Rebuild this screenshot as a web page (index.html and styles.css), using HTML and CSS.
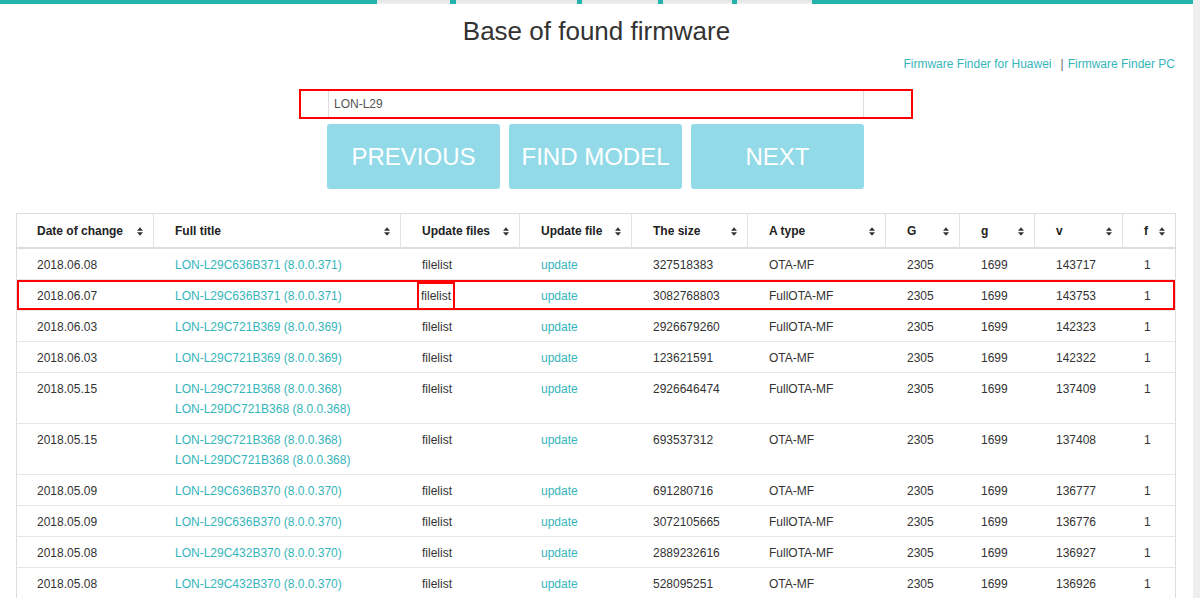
FILE: index.html
```html
<!DOCTYPE html>
<html>
<head>
<meta charset="utf-8">
<link rel="stylesheet" href="styles.css">
</head>
<body>
<div class="page">
  <div class="main">
    <div class="topbar">
      <span class="tab"></span><span class="tab"></span><span class="tab"></span><span class="tab"></span><span class="tab"></span>
    </div>
    <h1 class="title">Base of found firmware</h1>
    <div class="links">
      <a class="link">Firmware Finder for Huawei</a><span class="sep">|</span><a class="link">Firmware Finder PC</a>
    </div>
    <div class="search-box">
      <div class="search-input">LON-L29</div>
    </div>
    <div class="buttons">
      <div class="btn">PREVIOUS</div>
      <div class="btn">FIND MODEL</div>
      <div class="btn">NEXT</div>
    </div>
    <table class="fw">
      <colgroup>
        <col class="c1"><col class="c2"><col class="c3"><col class="c4"><col class="c5"><col class="c6"><col class="c7"><col class="c8"><col class="c9"><col class="c10">
      </colgroup>
      <thead>
        <tr>
          <th><div class="th-in"><span>Date of change</span><svg class="sort" viewBox="0 0 7 10"><path d="M0 4 L3.5 0 L7 4Z M0 6 L3.5 10 L7 6Z"/></svg></div></th>
          <th><div class="th-in"><span>Full title</span><svg class="sort" viewBox="0 0 7 10"><path d="M0 4 L3.5 0 L7 4Z M0 6 L3.5 10 L7 6Z"/></svg></div></th>
          <th><div class="th-in"><span>Update files</span><svg class="sort" viewBox="0 0 7 10"><path d="M0 4 L3.5 0 L7 4Z M0 6 L3.5 10 L7 6Z"/></svg></div></th>
          <th><div class="th-in"><span>Update file</span><svg class="sort" viewBox="0 0 7 10"><path d="M0 4 L3.5 0 L7 4Z M0 6 L3.5 10 L7 6Z"/></svg></div></th>
          <th><div class="th-in"><span>The size</span><svg class="sort" viewBox="0 0 7 10"><path d="M0 4 L3.5 0 L7 4Z M0 6 L3.5 10 L7 6Z"/></svg></div></th>
          <th><div class="th-in"><span>A type</span><svg class="sort" viewBox="0 0 7 10"><path d="M0 4 L3.5 0 L7 4Z M0 6 L3.5 10 L7 6Z"/></svg></div></th>
          <th><div class="th-in"><span>G</span><svg class="sort" viewBox="0 0 7 10"><path d="M0 4 L3.5 0 L7 4Z M0 6 L3.5 10 L7 6Z"/></svg></div></th>
          <th><div class="th-in"><span>g</span><svg class="sort" viewBox="0 0 7 10"><path d="M0 4 L3.5 0 L7 4Z M0 6 L3.5 10 L7 6Z"/></svg></div></th>
          <th><div class="th-in"><span>v</span><svg class="sort" viewBox="0 0 7 10"><path d="M0 4 L3.5 0 L7 4Z M0 6 L3.5 10 L7 6Z"/></svg></div></th>
          <th><div class="th-in"><span>f</span><svg class="sort" viewBox="0 0 7 10"><path d="M0 4 L3.5 0 L7 4Z M0 6 L3.5 10 L7 6Z"/></svg></div></th>
        </tr>
      </thead>
      <tbody>
        <tr><td>2018.06.08</td><td><a class="link">LON-L29C636B371 (8.0.0.371)</a></td><td>filelist</td><td><a class="link">update</a></td><td>327518383</td><td>OTA-MF</td><td>2305</td><td>1699</td><td>143717</td><td>1</td></tr>
        <tr class="marked"><td>2018.06.07</td><td><a class="link">LON-L29C636B371 (8.0.0.371)</a></td><td><span class="boxed">filelist</span></td><td><a class="link">update</a></td><td>3082768803</td><td>FullOTA-MF</td><td>2305</td><td>1699</td><td>143753</td><td>1</td></tr>
        <tr><td>2018.06.03</td><td><a class="link">LON-L29C721B369 (8.0.0.369)</a></td><td>filelist</td><td><a class="link">update</a></td><td>2926679260</td><td>FullOTA-MF</td><td>2305</td><td>1699</td><td>142323</td><td>1</td></tr>
        <tr><td>2018.06.03</td><td><a class="link">LON-L29C721B369 (8.0.0.369)</a></td><td>filelist</td><td><a class="link">update</a></td><td>123621591</td><td>OTA-MF</td><td>2305</td><td>1699</td><td>142322</td><td>1</td></tr>
        <tr><td>2018.05.15</td><td><a class="link">LON-L29C721B368 (8.0.0.368)</a><br><a class="link">LON-L29DC721B368 (8.0.0.368)</a></td><td>filelist</td><td><a class="link">update</a></td><td>2926646474</td><td>FullOTA-MF</td><td>2305</td><td>1699</td><td>137409</td><td>1</td></tr>
        <tr><td>2018.05.15</td><td><a class="link">LON-L29C721B368 (8.0.0.368)</a><br><a class="link">LON-L29DC721B368 (8.0.0.368)</a></td><td>filelist</td><td><a class="link">update</a></td><td>693537312</td><td>OTA-MF</td><td>2305</td><td>1699</td><td>137408</td><td>1</td></tr>
        <tr><td>2018.05.09</td><td><a class="link">LON-L29C636B370 (8.0.0.370)</a></td><td>filelist</td><td><a class="link">update</a></td><td>691280716</td><td>OTA-MF</td><td>2305</td><td>1699</td><td>136777</td><td>1</td></tr>
        <tr><td>2018.05.09</td><td><a class="link">LON-L29C636B370 (8.0.0.370)</a></td><td>filelist</td><td><a class="link">update</a></td><td>3072105665</td><td>FullOTA-MF</td><td>2305</td><td>1699</td><td>136776</td><td>1</td></tr>
        <tr><td>2018.05.08</td><td><a class="link">LON-L29C432B370 (8.0.0.370)</a></td><td>filelist</td><td><a class="link">update</a></td><td>2889232616</td><td>FullOTA-MF</td><td>2305</td><td>1699</td><td>136927</td><td>1</td></tr>
        <tr><td>2018.05.08</td><td><a class="link">LON-L29C432B370 (8.0.0.370)</a></td><td>filelist</td><td><a class="link">update</a></td><td>528095251</td><td>OTA-MF</td><td>2305</td><td>1699</td><td>136926</td><td>1</td></tr>
      </tbody>
    </table>
  </div>
  <div class="scrollstrip"></div>
</div>
</body>
</html>
```
FILE: styles.css
```css
html, body {
  margin: 0;
  padding: 0;
  height: 598px;
  overflow: hidden;
  background: #fff;
}
body {
  font-family: "Liberation Sans", Arial, sans-serif;
  font-size: 12px;
  color: #333;
}
.page {
  display: flex;
  height: 598px;
}
.main {
  width: 1193px;
  flex: none;
}
.scrollstrip {
  flex: 1;
  background: #eeeeee;
}
.topbar {
  height: 4px;
  background: #22b3ad;
  display: flex;
  gap: 5px;
  padding-left: 377px;
}
.tab {
  height: 4px;
  background: linear-gradient(#e4e4e4, #f0f0f0);
}
.tab:nth-child(1) { width: 73px; margin-right: 1px; }
.tab:nth-child(2) { width: 121px; }
.tab:nth-child(3) { width: 76px; }
.tab:nth-child(4) { width: 69px; }
.tab:nth-child(5) { width: 75px; }
.title {
  margin: 14px 0 0;
  font-size: 26px;
  font-weight: normal;
  line-height: 26px;
  text-align: center;
  color: #333;
}
.links {
  margin-top: 11px;
  padding-right: 18px;
  text-align: right;
  line-height: 18px;
  font-size: 12px;
}
.link {
  color: #35b5bb;
  text-decoration: none;
}
.sep {
  color: #666;
  margin: 0 4px 0 9px;
}
.search-box {
  margin: 16px 0 0 299px;
  width: 610px;
  height: 26px;
  border: 2px solid #f00;
  display: flex;
}
.search-input {
  margin-left: 27px;
  width: 529px;
  border-left: 1px solid #ddd;
  border-right: 1px solid #ddd;
  padding-left: 5px;
  line-height: 26px;
  font-size: 12px;
  color: #555;
}
.buttons {
  display: flex;
  gap: 9px;
  margin: 5px 0 0 327px;
}
.btn {
  width: 173px;
  height: 65px;
  background: #93dae9;
  border-radius: 3px;
  color: #fff;
  font-size: 24px;
  line-height: 65px;
  text-align: center;
}
.fw {
  margin: 24px 0 0 16px;
  width: 1160px;
  table-layout: fixed;
  border-collapse: separate;
  border-spacing: 0;
}
.c1 { width: 138px; }
.c2 { width: 247px; }
.c3 { width: 119px; }
.c4 { width: 112px; }
.c5 { width: 116px; }
.c6 { width: 138px; }
.c7 { width: 74px; }
.c8 { width: 75px; }
.c9 { width: 88px; }
.c10 { width: 53px; }
.fw th {
  text-align: left;
  font-weight: bold;
  font-size: 12px;
  line-height: 18px;
  padding: 8px 10px 7px 21px;
  border-top: 1px solid #ddd;
  border-bottom: 2px solid #ddd;
  border-right: 1px solid #e2e2e2;
  color: #222;
}
.fw th:first-child {
  border-left: 1px solid #ddd;
  padding-left: 20px;
}
.fw th:last-child {
  border-right: 1px solid #ddd;
}
.th-in {
  display: flex;
  justify-content: space-between;
  align-items: center;
}
.sort {
  width: 6px;
  height: 9px;
  fill: #333;
  flex: none;
}
.fw td {
  padding: 6px 8px 4px 21px;
  line-height: 20px;
  border-bottom: 1px solid #e6e6e6;
  vertical-align: top;
  white-space: nowrap;
}
.fw td:first-child {
  border-left: 1px solid #ddd;
  padding-left: 20px;
}
.fw td:last-child {
  border-right: 1px solid #ddd;
}
.marked td {
  box-shadow: inset 0 2px 0 #f00, inset 0 -2px 0 #f00;
}
.marked td:first-child {
  box-shadow: inset 0 2px 0 #f00, inset 0 -2px 0 #f00, inset 2px 0 0 #f00;
}
.marked td:last-child {
  box-shadow: inset 0 2px 0 #f00, inset 0 -2px 0 #f00, inset -2px 0 0 #f00;
}
.boxed {
  display: inline-block;
  margin-left: -1px;
  outline: 2px solid #f00;
  outline-offset: 2px;
}
```
